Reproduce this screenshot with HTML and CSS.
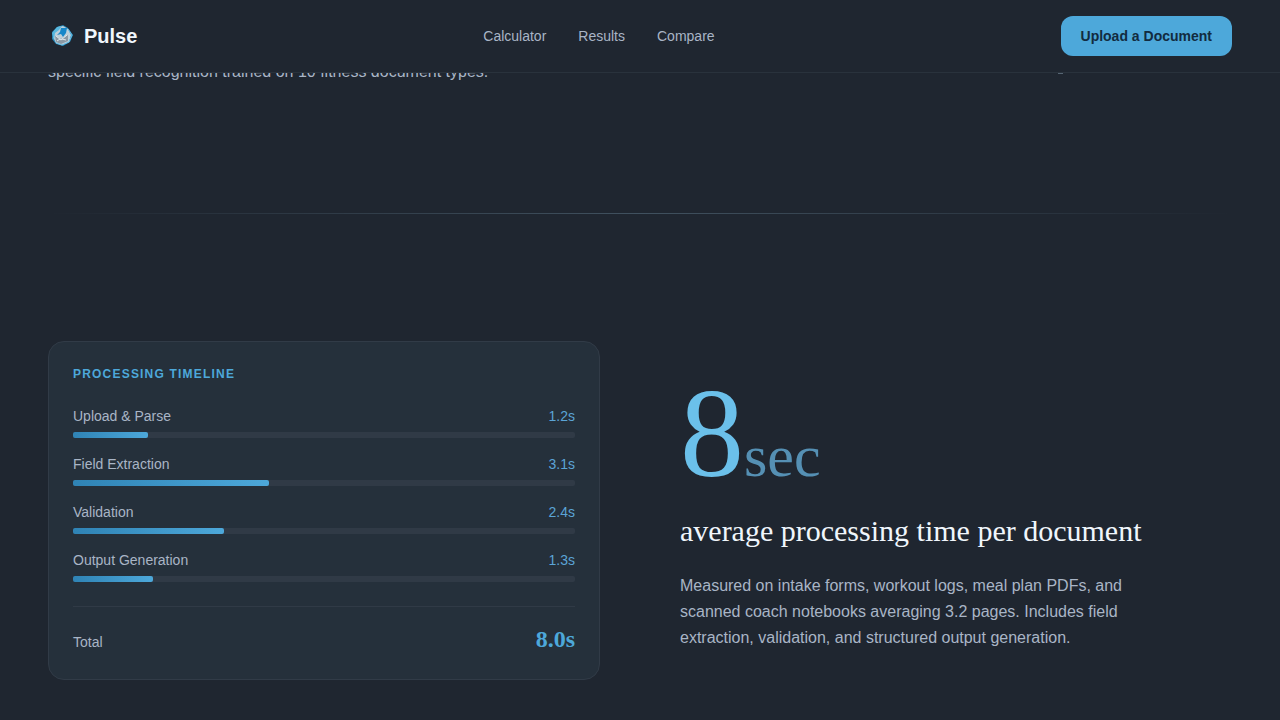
FILE: index.html
```html
<!DOCTYPE html>
<html lang="en">
<head>
  <meta charset="UTF-8" />
  <meta name="viewport" content="width=device-width, initial-scale=1.0" />
  <title>Pulse</title>
  <link rel="stylesheet" href="styles.css">
</head>
<body>

  <header class="site-header">
    <a href="#" class="brand">
      <svg class="brand-icon" viewBox="0 0 28 28" aria-hidden="true">
        <path d="M9 5 L15 3 L20 6 L25 13 L22 20 L15 24 L8 22 L4 17 L4 10 Z" fill="#2586b8"/>
        <path d="M10 5 L15 4 L20 7 L23 13 L21 20 L14 23 L8 21 L5 15 L6 9 Z" fill="#bccfda"/>
        <path d="M4 11 L9 5 L14 4 L11 8 L7 11 L6 18 Z" fill="#58b8df"/>
        <path d="M13 6 L19 6 L18 11 L15 15 L13 12 L9 13 L12 10 Z" fill="#1787c9"/>
        <path d="M7 14 L13 17 L20 13 L20 19 L13 22 L8 20 Z" fill="#8b99a4"/>
        <path d="M8 14 L13 18 L19 13 M9 19 L12 17 M14 17 L18 18" fill="none" stroke="#dde8ed" stroke-width="1"/>
        <path d="M20 7 L24 13 L21 20 L14 23 L8 21" fill="none" stroke="#69bee4" stroke-width="1"/>
      </svg>
      <span>Pulse</span>
    </a>
    <nav class="site-nav">
      <a href="#calculator">Calculator</a>
      <a href="#results">Results</a>
      <a href="#compare">Compare</a>
    </nav>
    <button type="button" class="upload-button">Upload a Document</button>
  </header>

  <main>
    <section class="split recognition">
      <p class="copy">specific field recognition trained on 10 fitness document types.</p>
      <div class="marker-row"><span class="marker"></span></div>
    </section>

    <hr class="divider">

    <section class="split speed" id="results">
      <div class="card">
        <h2 class="card-title">Processing Timeline</h2>

        <div class="steps">
          <div class="step">
            <div class="step-label"><span>Upload &amp; Parse</span><span class="step-time">1.2s</span></div>
            <div class="track"><div class="fill" style="width: 15%"></div></div>
          </div>
          <div class="step">
            <div class="step-label"><span>Field Extraction</span><span class="step-time">3.1s</span></div>
            <div class="track"><div class="fill" style="width: 39%"></div></div>
          </div>
          <div class="step">
            <div class="step-label"><span>Validation</span><span class="step-time">2.4s</span></div>
            <div class="track"><div class="fill" style="width: 30%"></div></div>
          </div>
          <div class="step">
            <div class="step-label"><span>Output Generation</span><span class="step-time">1.3s</span></div>
            <div class="track"><div class="fill" style="width: 16%"></div></div>
          </div>
        </div>

        <div class="total">
          <span>Total</span>
          <strong class="total-time">8.0s</strong>
        </div>
      </div>

      <div class="stat">
        <div class="stat-number">8<span class="stat-unit">sec</span></div>
        <h2 class="stat-title">average processing time per document</h2>
        <p class="copy">Measured on intake forms, workout logs, meal plan PDFs, and scanned coach notebooks averaging 3.2 pages. Includes field extraction, validation, and structured output generation.</p>
      </div>
    </section>
  </main>

</body>
</html>
```
FILE: styles.css
```css
* {
  box-sizing: border-box;
  margin: 0;
  padding: 0;
}

body {
  background-color: #1f2630;
  color: #a9b5c6;
  font-family: "Liberation Sans", Arial, sans-serif;
  font-size: 14px;
}

a {
  color: inherit;
  text-decoration: none;
}

/* Header */
.site-header {
  position: fixed;
  top: 0;
  left: 0;
  right: 0;
  z-index: 10;
  display: flex;
  align-items: center;
  justify-content: space-between;
  padding: 16px 48px;
  background-color: #1f2630;
  border-bottom: 1px solid #29323c;
}

.brand {
  display: flex;
  align-items: center;
  gap: 8px;
  color: #f0f6fc;
  font-size: 20px;
  font-weight: bold;
}

.brand-icon {
  width: 28px;
  height: 28px;
}

.site-nav {
  display: flex;
  gap: 32px;
}

.site-nav a:hover {
  color: #f0f6fc;
}

.upload-button {
  height: 40px;
  padding: 0 20px;
  border: none;
  border-radius: 12px;
  background-color: #4da8da;
  color: #122b40;
  font-family: inherit;
  font-size: 14px;
  font-weight: bold;
  cursor: pointer;
}

/* Sections */
.split {
  display: grid;
  grid-template-columns: 1fr 1fr;
  gap: 80px;
  align-items: center;
  padding: 128px 48px;
}

.recognition {
  padding-top: 59px;
}

.speed {
  padding-top: 127px;
  padding-bottom: 40px;
}

.copy {
  max-width: 480px;
  font-size: 16px;
  line-height: 26px;
}

.marker-row {
  display: flex;
  justify-content: flex-end;
  padding-right: 169px;
}

.marker {
  width: 5px;
  height: 4px;
  background-color: #566573;
}

.divider {
  height: 1px;
  margin: 0 48px;
  border: none;
  background: linear-gradient(90deg, transparent, #40515f, transparent);
}

/* Timeline card */
.card {
  padding: 24px;
  border: 1px solid #313b47;
  border-radius: 16px;
  background-color: #25303b;
}

.card-title {
  margin-bottom: 22px;
  color: #4da8da;
  font-size: 12px;
  line-height: 16px;
  letter-spacing: 0.1em;
  text-transform: uppercase;
}

.steps {
  display: grid;
  gap: 14px;
}

.step {
  display: grid;
  gap: 4px;
}

.step-label {
  display: flex;
  justify-content: space-between;
  line-height: 24px;
}

.step-time {
  color: #5ba4d6;
}

.track {
  height: 6px;
  border-radius: 2px;
  background-color: #303a46;
}

.fill {
  height: 100%;
  border-radius: 2px;
  background: linear-gradient(90deg, #2f83b5, #4da8da);
}

.total {
  display: flex;
  align-items: baseline;
  justify-content: space-between;
  margin-top: 24px;
  padding-top: 16px;
  border-top: 1px solid #303a46;
}

.total-time {
  color: #4da8da;
  font-family: "Liberation Serif", "Times New Roman", serif;
  font-size: 24px;
  line-height: 32px;
}

/* Big number */
.stat {
  padding-bottom: 2px;
}

.stat-number {
  color: #6bc0ea;
  font-family: "Liberation Serif", "Times New Roman", serif;
  font-size: 128px;
  line-height: 128px;
}

.stat-unit {
  color: #5590b4;
  font-size: 60px;
  line-height: 60px;
}

.stat-title {
  margin: 16px 0 24px;
  color: #f0f6fc;
  font-family: "Liberation Serif", "Times New Roman", serif;
  font-size: 30px;
  font-weight: normal;
  line-height: 36px;
}

@media (max-width: 800px) {
  .split {
    grid-template-columns: 1fr;
  }
}
```
